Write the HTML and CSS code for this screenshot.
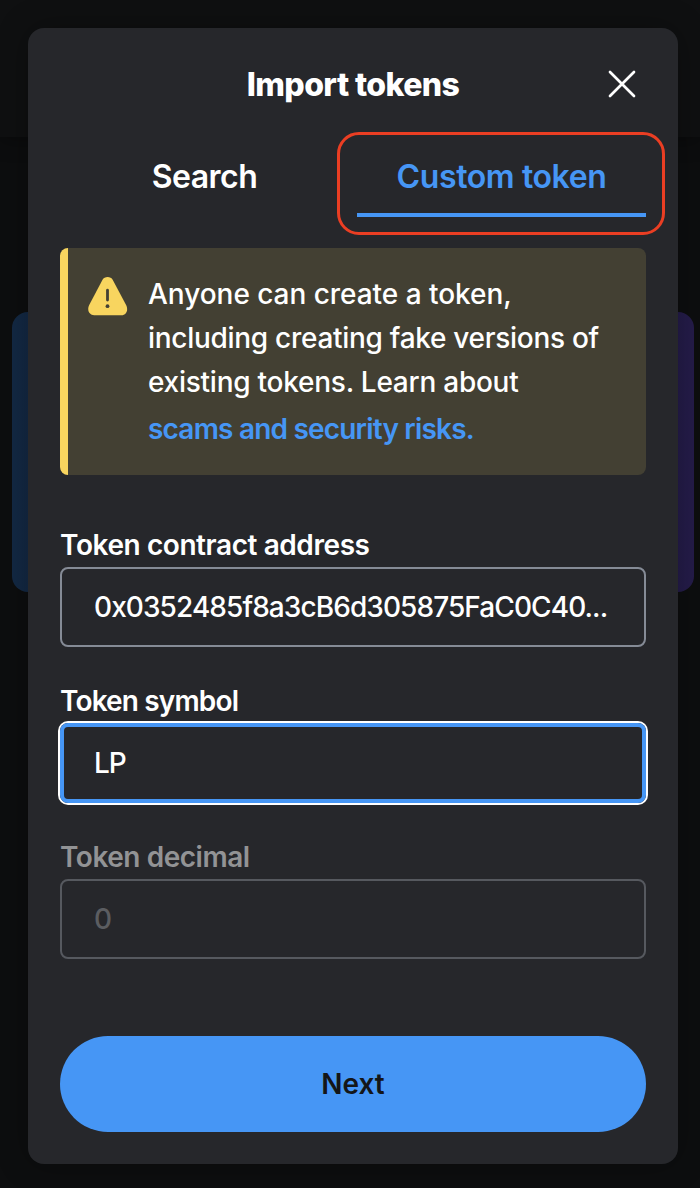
FILE: index.html
```html
<!DOCTYPE html>
<html lang="en">
<head>
<meta charset="utf-8">
<title>Import tokens</title>
<link rel="stylesheet" href="styles.css">
</head>
<body>
<div class="page">
  <div class="topbar"></div>
  <div class="backdrop-card"></div>
  <section class="modal">
    <header class="modal-header">
      <h1 class="title">Import tokens</h1>
      <button class="close" aria-label="Close">
        <svg width="28" height="28" viewBox="0 0 28 28" fill="none" stroke="#fff" stroke-width="2.7" stroke-linecap="round"><path d="M2 2 26 26M26 2 2 26"/></svg>
      </button>
    </header>
    <nav class="tabs">
      <a class="tab"><span class="search-text">Search</span></a>
      <a class="tab active"><span>Custom token</span></a>
    </nav>
    <div class="warning">
      <svg class="warning-icon" width="40" height="40" viewBox="0 0 40 40">
        <path fill="#f8d55f" d="M14.4 3.9C16.5.1 22.7.1 24.8 3.9L38.1 29.1C40.6 33.9 38.5 39.2 33.3 39.2H6.2C1 39.2-1.2 33.9 1.2 29.1Z"/>
        <path d="M19.5 14.2v9.8" stroke="#434033" stroke-width="2.8" stroke-linecap="round"/>
        <circle cx="19.5" cy="30.2" r="1.9" fill="#434033"/>
      </svg>
      <div class="warning-text">
        <div class="line l1">Anyone can create a token,</div>
        <div class="line l2">including creating fake versions of</div>
        <div class="line l3">existing tokens. Learn about</div>
        <a class="link">scams and security risks.</a>
      </div>
    </div>
    <div class="field">
      <div class="label address-label">Token contract address</div>
      <div class="input address">0x0352485f8a3cB6d305875FaC0C40...</div>
    </div>
    <div class="field">
      <div class="label symbol-label">Token symbol</div>
      <div class="input focused">LP</div>
    </div>
    <div class="field disabled">
      <div class="label decimal-label">Token decimal</div>
      <div class="input placeholder">0</div>
    </div>
    <button class="next">Next</button>
  </section>
  <div class="highlight"></div>
</div>
</body>
</html>
```
FILE: styles.css
```css
* { box-sizing: border-box; }
body { margin: 0; background: #0d0e0f; color: #fff; font-family: Inter, "Liberation Sans", sans-serif; }
.page { position: relative; height: 1188px; padding: 28px 22px 24px 28px; overflow: hidden; }
.topbar { position: absolute; top: 0; left: 0; right: 0; height: 137px; background: #0f1011; box-shadow: 0 2px 20px rgba(0, 0, 0, .35); }
.backdrop-card { position: absolute; left: 12px; top: 312px; width: 682px; height: 280px; border-radius: 16px; background: linear-gradient(90deg, #132944, #251c4a); }
.modal { position: relative; height: 1136px; padding: 32px; border-radius: 16px; background: #26272b; box-shadow: 0 0 32px rgba(0, 0, 0, .3); }
.modal-header { display: grid; grid-template-columns: 48px 1fr 48px; align-items: center; height: 48px; }
.title { grid-column: 2; height: 48px; margin: 0; padding-top: 1px; text-align: center; font-size: 32px; line-height: 48px; font-weight: 800; letter-spacing: -.58px; }
.close { display: grid; place-items: center; width: 48px; height: 48px; padding: 0; border: 0; background: none; }
.tabs { display: grid; grid-template-columns: 1fr 1fr; align-items: end; gap: 8px; height: 109px; margin-bottom: 31px; }
.tab { height: 80px; text-align: center; font-size: 32px; line-height: 80px; font-weight: 600; letter-spacing: -.4px; border-bottom: 4px solid transparent; }
.search-text { letter-spacing: -.55px; }
.tab.active { color: #4696f5; border-bottom-color: #4696f5; }
.warning { display: flex; gap: 20px; height: 227px; padding: 24px 20px 0; border-left: 8px solid #f8d55f; border-radius: 8px; background: #434033; }
.warning-icon { flex: none; margin-top: 4px; }
.warning-text { font-size: 28px; line-height: 44px; font-weight: 500; white-space: nowrap; }
.l1 { letter-spacing: -.04px; }
.l2 { letter-spacing: -.29px; }
.l3 { letter-spacing: -.25px; }
.link { display: block; margin-top: 3px; color: #4696f5; font-weight: 600; letter-spacing: -.8px; }
.warning + .field { margin-top: 48px; }
.field { margin-top: 32px; }
.label { height: 44px; font-size: 28px; line-height: 44px; font-weight: 600; }
.address-label { letter-spacing: -.42px; }
.symbol-label { letter-spacing: -.85px; }
.decimal-label { letter-spacing: -.46px; }
.input { height: 80px; padding: 0 32px; border: 2px solid #858b96; border-radius: 8px; font-size: 28px; line-height: 76px; font-weight: 500; white-space: nowrap; }
.address { letter-spacing: -.92px; }
.focused { padding: 0 30px; border: 4px solid #4696f5; line-height: 72px; letter-spacing: -1px; box-shadow: 0 0 0 2px #fff; }
.disabled .label { color: #929395; }
.disabled .input { border-color: #56595f; color: #5b5d61; }
.next { display: block; width: 100%; height: 96px; margin-top: 77px; padding: 0; border: 0; border-radius: 48px; background: #4696f5; color: #141618; font: 600 28px/96px Inter, "Liberation Sans", sans-serif; }
.highlight { position: absolute; left: 337px; top: 132px; width: 328px; height: 103px; border: 3px solid #ea3e23; border-radius: 22px; }
```
